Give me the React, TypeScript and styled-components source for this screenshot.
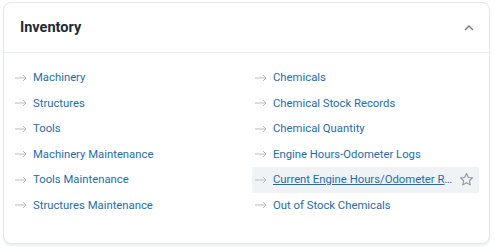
import { FC } from "react";
import styled, { createGlobalStyle } from "styled-components";

const GlobalStyle = createGlobalStyle`
  html, body {
    margin: 0;
    padding: 0;
    background: #ffffff;
    font-family: Roboto, "Liberation Sans", sans-serif;
  }
`;

const Page = styled.div`
  padding: 2px 5px 5px 3px;
`;

const Card = styled.section`
  border: 1px solid #e3e7eb;
  border-radius: 8px;
  background: #ffffff;
  box-shadow: 0 2px 2px rgba(30, 45, 60, 0.08);
`;

const Header = styled.header`
  display: flex;
  align-items: center;
  justify-content: space-between;
  height: 49px;
  padding: 0 10px 0 16px;
  border-bottom: 1px solid #e8ecef;
`;

const Title = styled.h2`
  margin: 0;
  font-size: 14.5px;
  font-weight: 700;
  color: #1c2b36;
`;

const Toggle = styled.button`
  display: flex;
  align-items: center;
  justify-content: center;
  width: 20px;
  height: 20px;
  padding: 0;
  border: none;
  background: none;
`;

const Body = styled.div`
  display: grid;
  grid-template-columns: 227px 227px;
  grid-auto-flow: column;
  grid-template-rows: repeat(6, 25.5px);
  column-gap: 13px;
  padding: 12px 10px 25px 8px;
`;

const Row = styled.div<{ $active?: boolean }>`
  display: flex;
  align-items: center;
  gap: 6px;
  padding: 0 5px 0 3px;
  min-width: 0;
  background: ${(p) => (p.$active ? "#f0f3f5" : "transparent")};
`;

const Link = styled.a<{ $active?: boolean }>`
  flex: 1;
  min-width: 0;
  font-size: 11.3px;
  color: #1e6cae;
  white-space: nowrap;
  overflow: hidden;
  text-overflow: ellipsis;
  text-decoration: ${(p) => (p.$active ? "underline" : "none")};
  cursor: pointer;
`;

const Arrow: FC = () => (
  <svg width="12" height="8" viewBox="0 0 12 8" fill="none">
    <path d="M0 4h11M8 1l3 3-3 3" stroke="#b9bcbf" strokeWidth="1" />
  </svg>
);

const Star: FC = () => (
  <svg width="15" height="15" viewBox="0 0 24 24" fill="none">
    <path
      d="M12 2.5l2.9 6.2 6.7.7-5 4.6 1.4 6.6L12 17.2l-6 3.4 1.4-6.6-5-4.6 6.7-.7z"
      stroke="#8a949c"
      strokeWidth="1.7"
      strokeLinejoin="round"
    />
  </svg>
);

const links = [
  "Machinery",
  "Structures",
  "Tools",
  "Machinery Maintenance",
  "Tools Maintenance",
  "Structures Maintenance",
  "Chemicals",
  "Chemical Stock Records",
  "Chemical Quantity",
  "Engine Hours-Odometer Logs",
  "Current Engine Hours/Odometer Readings",
  "Out of Stock Chemicals",
];

const activeIndex = 10;

const App: FC = () => {
  return (
    <Page>
      <GlobalStyle />
      <Card>
        <Header>
          <Title>Inventory</Title>
          <Toggle aria-label="Collapse">
            <svg width="10" height="6" viewBox="0 0 10 6" fill="none">
              <path d="M1 5l4-4 4 4" stroke="#6b7680" strokeWidth="1.3" />
            </svg>
          </Toggle>
        </Header>
        <Body>
          {links.map((label, i) => (
            <Row key={label} $active={i === activeIndex}>
              <Arrow />
              <Link $active={i === activeIndex}>{label}</Link>
              {i === activeIndex && <Star />}
            </Row>
          ))}
        </Body>
      </Card>
    </Page>
  );
};

export default App;
